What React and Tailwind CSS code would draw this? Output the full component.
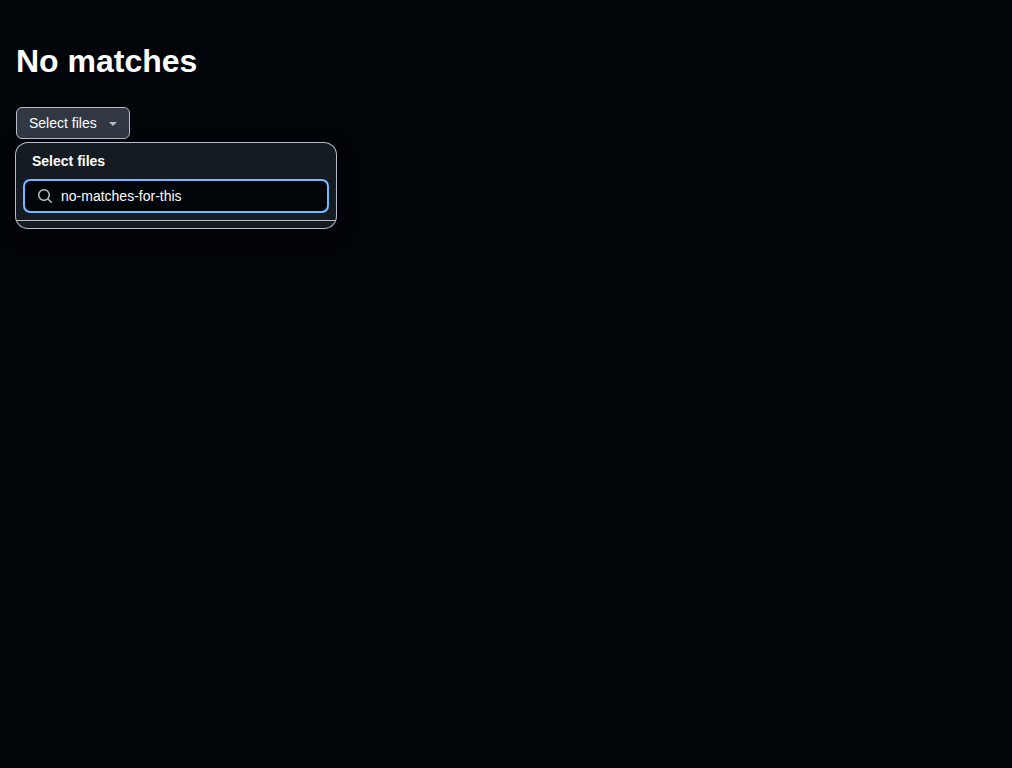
function TriangleDownIcon() {
  return (
    <svg aria-hidden="true" viewBox="0 0 16 16" className="size-4 fill-[#b7bdc8]">
      <path d="m4.427 7.427 3.396 3.396a.25.25 0 0 0 .354 0l3.396-3.396A.25.25 0 0 0 11.396 7H4.604a.25.25 0 0 0-.177.427Z" />
    </svg>
  );
}

function SearchIcon() {
  return (
    <svg aria-hidden="true" viewBox="0 0 16 16" className="size-4 shrink-0 fill-[#b7bdc8]">
      <path d="M10.68 11.74a6 6 0 0 1-7.922-8.982 6 6 0 0 1 8.982 7.922l3.04 3.04a.749.749 0 0 1-.326 1.275.749.749 0 0 1-.734-.215ZM11.5 7a4.499 4.499 0 1 0-8.997 0A4.499 4.499 0 0 0 11.5 7Z" />
    </svg>
  );
}

function SelectPanel() {
  return (
    <section
      id="select-files-panel"
      aria-labelledby="select-files-title"
      className="absolute top-full left-0 mt-1 w-80 overflow-clip rounded-xl bg-[#151b23] shadow-[0_0_0_1px_#b7bdc8,0_6px_12px_-3px_#01040966,0_6px_18px_0_#01040966]"
    >
      <div className="p-2">
        <h2 id="select-files-title" className="px-2 text-sm leading-[21px] font-semibold">
          Select files
        </h2>
        <label className="mt-2 flex h-8 items-center gap-2 rounded-md border border-[#74b9ff] bg-[#010409] px-3 outline-2 -outline-offset-1 outline-[#74b9ff]">
          <SearchIcon />
          <input
            type="text"
            aria-label="Filter files"
            defaultValue="no-matches-for-this"
            className="min-w-0 flex-1 bg-transparent text-sm leading-5 outline-none"
          />
        </label>
      </div>
      <div className="h-2 border-t border-[#b7bdc8]" />
    </section>
  );
}

export default function App() {
  return (
    <main className="min-h-screen bg-[#010409] px-4 py-10 font-['Liberation_Sans',Arial,sans-serif] text-white">
      <h1 className="mb-6 text-[32px] leading-[43px] font-semibold">No matches</h1>
      <div className="relative w-fit">
        <button
          type="button"
          aria-haspopup="true"
          aria-expanded="true"
          aria-controls="select-files-panel"
          className="flex h-8 items-center gap-2 rounded-md border border-[#b7bdc8] bg-[#313844] pr-2 pl-3 text-sm leading-5"
        >
          Select files
          <TriangleDownIcon />
        </button>
        <SelectPanel />
      </div>
    </main>
  );
}
